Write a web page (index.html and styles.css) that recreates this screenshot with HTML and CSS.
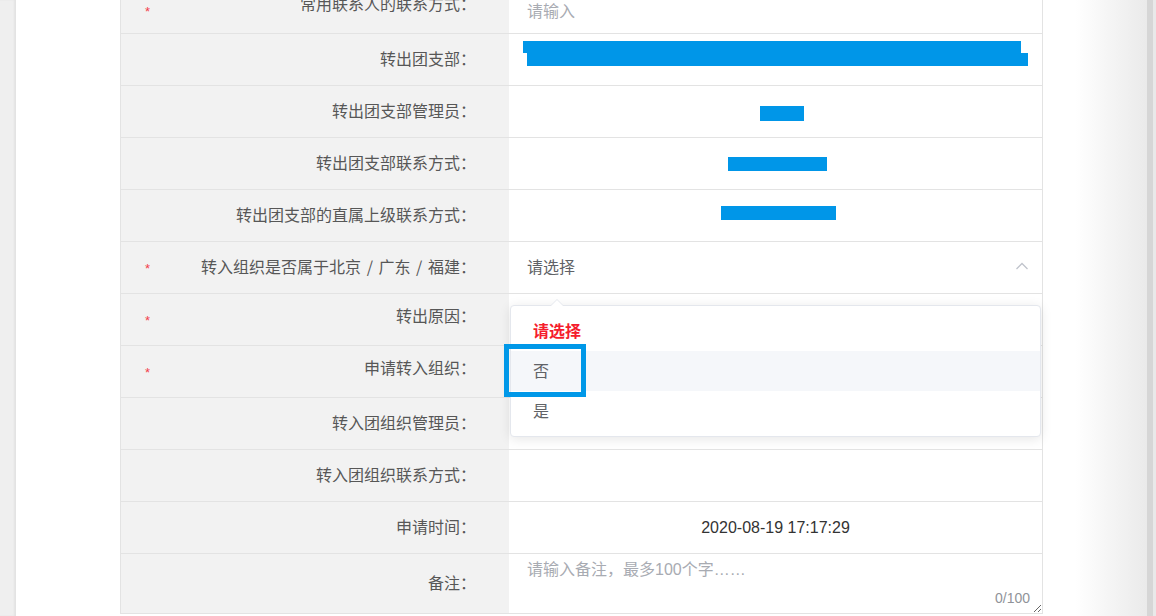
FILE: index.html
```html
<!DOCTYPE html>
<html lang="zh-CN">
<head>
<meta charset="utf-8">
<title>转出申请</title>
<link rel="stylesheet" href="styles.css">
</head>
<body>
<div class="screen">
  <div class="gutter"></div>
  <div class="panel">
    <div class="form">
      <div class="row">
        <div class="label first-label"><span class="star">*</span><span class="label-text">常用联系人的联系方式：</span></div>
        <div class="value first"><span class="placeholder">请输入</span></div>
      </div>
      <div class="row">
        <div class="label"><span class="star"></span><span class="label-text">转出团支部：</span></div>
        <div class="value stack">
          <div class="redact bar1"></div>
          <div class="redact bar2"></div>
        </div>
      </div>
      <div class="row">
        <div class="label"><span class="star"></span><span class="label-text">转出团支部管理员：</span></div>
        <div class="value center r3"><div class="redact box3"></div></div>
      </div>
      <div class="row">
        <div class="label"><span class="star"></span><span class="label-text">转出团支部联系方式：</span></div>
        <div class="value center"><div class="redact box4"></div></div>
      </div>
      <div class="row">
        <div class="label"><span class="star"></span><span class="label-text">转出团支部的直属上级联系方式：</span></div>
        <div class="value center r5"><div class="redact box5"></div></div>
      </div>
      <div class="row">
        <div class="label"><span class="star">*</span><span class="label-text">转入组织是否属于北京<span class="sep"> / </span>广东<span class="sep"> / </span>福建：</span></div>
        <div class="value select">
          <span class="select-text">请选择</span>
          <svg class="chevron" width="14" height="8" viewBox="0 0 14 8"><polyline points="1.5,7 7,1.5 12.5,7" fill="none" stroke="#c0c4cc" stroke-width="1.3"/></svg>
          <div class="dropdown">
            <div class="item active">请选择</div>
            <div class="item hover">否</div>
            <div class="item">是</div>
            <div class="mark"></div>
          </div>
        </div>
      </div>
      <div class="row">
        <div class="label high"><span class="star">*</span><span class="label-text">转出原因：</span></div>
        <div class="value"></div>
      </div>
      <div class="row">
        <div class="label high"><span class="star">*</span><span class="label-text">申请转入组织：</span></div>
        <div class="value"></div>
      </div>
      <div class="row">
        <div class="label"><span class="star"></span><span class="label-text">转入团组织管理员：</span></div>
        <div class="value"></div>
      </div>
      <div class="row">
        <div class="label"><span class="star"></span><span class="label-text">转入团组织联系方式：</span></div>
        <div class="value"></div>
      </div>
      <div class="row">
        <div class="label"><span class="star"></span><span class="label-text">申请时间：</span></div>
        <div class="value center"><span class="date">2020-08-19 17:17:29</span></div>
      </div>
      <div class="row note-row">
        <div class="label"><span class="star"></span><span class="label-text">备注：</span></div>
        <div class="value note">
          <textarea placeholder="请输入备注，最多100个字……"></textarea>
          <span class="count">0/100</span>
        </div>
      </div>
    </div>
  </div>
  <div class="scrollbar"></div>
</div>
</body>
</html>
```

FILE: styles.css
```css
* { box-sizing: border-box; }

body {
  margin: 0;
  background: #fff;
  font-family: "Liberation Sans", "Noto Sans CJK SC", sans-serif;
}

.screen {
  display: flex;
  height: 616px;
  overflow: hidden;
}

.gutter {
  width: 16px;
  flex: none;
  background: #efefef;
  box-shadow: inset -2px 0 2px rgba(0, 0, 0, 0.05);
}

.panel {
  flex: 1;
  padding-left: 104px;
  overflow: hidden;
  background: linear-gradient(to right, #fff 1059px, #eaeaea);
}

.scrollbar {
  width: 9px;
  flex: none;
  background: linear-gradient(to right, #d6d6d6 6px, #e9e9e9 6px);
}

.form {
  width: 923px;
  margin-top: -18px;
  border-left: 1px solid #e3e3e3;
  border-right: 1px solid #e3e3e3;
}

.row {
  display: grid;
  grid-template-columns: 388px 1fr;
  height: 52px;
  border-bottom: 1px solid #e3e3e3;
}

.note-row { height: 60px; }

.label {
  display: flex;
  align-items: center;
  padding: 0 33px 4px 24px;
  background: #f2f2f2;
  font-family: "Noto Sans CJK SC", "Liberation Sans", sans-serif;
  font-size: 16px;
  color: #575757;
}

.first-label { padding-bottom: 10px; }
.first-label .star { margin-top: 17px; }

.label.high { padding-bottom: 10px; }
.label.high .star { margin-top: 11px; }

.star {
  width: 10px;
  flex: none;
  margin-top: 5px;
  font-family: "Liberation Sans", sans-serif;
  font-size: 13px;
  line-height: 13px;
  color: #f2404c;
}

.label-text {
  flex: 1;
  text-align: right;
  white-space: nowrap;
}

.sep { padding: 0 2px; }

.value {
  position: relative;
  display: flex;
  align-items: center;
  padding: 0 18px;
  font-size: 16px;
  color: #333;
}

.value.first { padding-top: 5px; }

.placeholder { color: #a8abb2; }

.value.center { justify-content: center; }

.value.stack {
  flex-direction: column;
  align-items: flex-start;
  justify-content: center;
  padding: 0 0 12px 0;
}

.redact { background: #0096e8; }

.bar1 { width: 498px; height: 12px; margin-left: 14px; }
.bar2 { width: 501px; height: 13px; margin-left: 18px; }

.r3 { padding-top: 4px; }
.box3 { width: 44px; height: 15px; margin-left: 13px; }
.box4 { width: 99px; height: 14px; margin-left: 4px; }
.r5 { padding-bottom: 5px; }
.box5 { width: 115px; height: 14px; margin-left: 6px; }

.value.select {
  justify-content: space-between;
  padding-right: 13px;
  padding-bottom: 3px;
}

.select-text { color: #606266; }

.chevron { display: block; }

.dropdown {
  position: absolute;
  top: 63px;
  left: 1px;
  right: 1px;
  z-index: 5;
  padding: 5px 0;
  background: #fff;
  border: 1px solid #e4e7ed;
  border-radius: 4px;
  box-shadow: 0 2px 12px rgba(0, 0, 0, 0.1);
}

.dropdown::before,
.dropdown::after {
  content: "";
  position: absolute;
  left: 40px;
  border: 6px solid transparent;
  border-top-width: 0;
}

.dropdown::before {
  top: -7px;
  border-bottom-color: #e4e7ed;
}

.dropdown::after {
  top: -6px;
  border-bottom-color: #fff;
}

.item {
  height: 40px;
  line-height: 38px;
  padding-left: 22px;
  font-family: "Noto Sans CJK SC", sans-serif;
  font-size: 16px;
  color: #606266;
}

.item.active {
  color: #f51c2c;
  font-weight: bold;
}

.item.hover { background: #f5f7fa; }

.mark {
  position: absolute;
  left: -7px;
  top: 38px;
  width: 82px;
  height: 53px;
  border: 5px solid #0098e8;
}

.date {
  font-family: "Liberation Sans", sans-serif;
  font-size: 16px;
  color: #333;
}

.value.note {
  display: block;
  padding: 0;
}

.value.note textarea {
  display: block;
  width: 100%;
  height: 100%;
  padding: 4px 18px;
  border: none;
  outline: none;
  resize: vertical;
  background: #fff;
  font-family: "Liberation Sans", "Noto Sans CJK SC", sans-serif;
  font-size: 16px;
  line-height: 24px;
  color: #333;
}

.value.note textarea::placeholder { color: #a8abb2; }

.count {
  position: absolute;
  right: 12px;
  bottom: 7px;
  font-size: 14px;
  line-height: 16px;
  color: #909399;
}
```
